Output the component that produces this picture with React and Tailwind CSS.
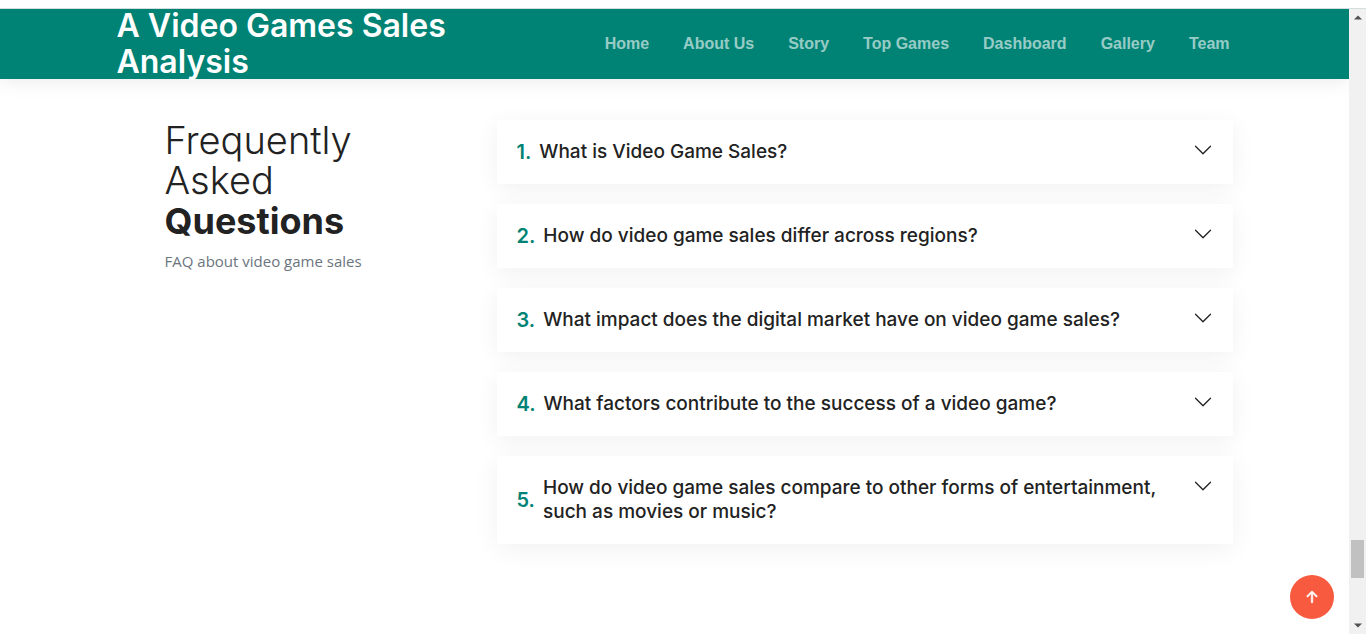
import { BsArrowUpShort, BsChevronDown } from "react-icons/bs";

const links = ["Home", "About Us", "Story", "Top Games", "Dashboard", "Gallery", "Team"];

const questions = [
  "What is Video Game Sales?",
  "How do video game sales differ across regions?",
  "What impact does the digital market have on video game sales?",
  "What factors contribute to the success of a video game?",
  "How do video game sales compare to other forms of entertainment, such as movies or music?",
];

function Header() {
  return (
    <header className="flex h-[70px] bg-[#008374] shadow-[0_0_20px_rgba(0,0,0,0.1)]">
      <div className="mx-auto flex w-full max-w-[1140px] items-center justify-between px-3">
        <a href="#home" className="w-[360px] font-['Inter',sans-serif] text-[32px] leading-9 font-semibold text-white">
          A Video Games Sales Analysis
        </a>
        <nav aria-label="Main" className="pb-0.5">
          <ul className="flex gap-[34px] pr-[3px]">
            {links.map((label) => (
              <li key={label}>
                <a
                  href={`#${label.toLowerCase().replace(" ", "-")}`}
                  className="font-['Liberation_Sans',sans-serif] text-base font-bold whitespace-nowrap text-white/60"
                >
                  {label}
                </a>
              </li>
            ))}
          </ul>
        </nav>
      </div>
    </header>
  );
}

function Question({ number, text }) {
  return (
    <h3 className="bg-white shadow-[0_5px_25px_rgba(0,0,0,0.06)]">
      <button
        type="button"
        aria-expanded="false"
        className="flex w-full items-start justify-between p-5 text-left font-['Inter',sans-serif] leading-6 font-medium text-[#222222]"
      >
        <span className="flex items-center gap-2">
          <span className="text-xl leading-6 font-semibold text-[#008374]">{number}.</span>
          <span className="text-[19px] leading-6">{text}</span>
        </span>
        <BsChevronDown className="size-5 shrink-0" aria-hidden="true" />
      </button>
    </h3>
  );
}

function Scrollbar() {
  return (
    <div aria-hidden="true" className="relative flex w-[17px] shrink-0 flex-col items-center bg-[#f1f1f1] py-1.5">
      <svg viewBox="0 0 8 5" className="h-[5px] w-2 fill-[#505050]">
        <path d="M0 4.5 4 .5l4 4z" />
      </svg>
      <div className="mt-auto mb-[45px] h-[38px] w-[13px] bg-[#c1c1c1]" />
      <svg viewBox="0 0 8 5" className="h-[5px] w-2 fill-[#505050]">
        <path d="M0 .5h8l-4 4z" />
      </svg>
    </div>
  );
}

export default function App() {
  return (
    <div className="flex min-h-screen flex-col bg-white">
      <div className="relative h-[9px] border-b border-[#d3dfde] bg-white" />
      <div className="flex flex-1">
        <div className="min-w-0 flex-1">
          <Header />
          <main className="mx-auto flex w-full max-w-[1140px] pt-[41px] pb-16">
            <section className="w-1/3 pr-12 pl-[60px]">
              <h2 className="font-['Inter',sans-serif] text-[38px] leading-10 font-light text-[#222222]">
                Frequently Asked <strong className="text-[36px] leading-10 font-bold">Questions</strong>
              </h2>
              <p className="mt-2 font-['Open_Sans',sans-serif] text-[15px] leading-6 text-[#6c757d]">
                FAQ about video game sales
              </p>
            </section>
            <section aria-label="Questions" className="flex w-2/3 flex-col gap-5 px-3">
              {questions.map((text, i) => (
                <Question key={text} number={i + 1} text={text} />
              ))}
            </section>
          </main>
        </div>
        <Scrollbar />
      </div>
      <a
        href="#home"
        aria-label="Back to top"
        className="fixed right-8 bottom-[15px] flex size-11 items-center justify-center rounded-full bg-[#f85a40] text-white"
      >
        <BsArrowUpShort className="size-6 stroke-current stroke-[0.4]" aria-hidden="true" />
      </a>
    </div>
  );
}
